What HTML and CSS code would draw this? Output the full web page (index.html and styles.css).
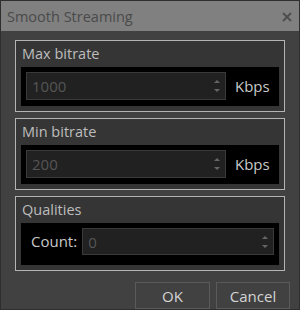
FILE: index.html
```html
<!DOCTYPE html>
<html lang="en">
<head>
<meta charset="UTF-8">
<title>Smooth Streaming</title>
<link rel="stylesheet" href="styles.css">
</head>
<body>

<div class="window">
    <div class="titlebar">
        <span class="title">Smooth Streaming</span>
        <svg class="close" width="10" height="10" viewBox="0 0 10 10">
            <path d="M1 1 L9 9 M9 1 L1 9" stroke="#4e4e4e" stroke-width="2" fill="none"/>
        </svg>
    </div>
    <div class="content">
        <div class="group">
            <div class="group-label">Max bitrate</div>
            <div class="panel">
                <div class="spin">
                    <span class="value">1000</span>
                    <span class="arrows"><i class="up"></i><i class="down"></i></span>
                </div>
                <span class="unit">Kbps</span>
            </div>
        </div>
        <div class="group">
            <div class="group-label">Min bitrate</div>
            <div class="panel">
                <div class="spin">
                    <span class="value">200</span>
                    <span class="arrows"><i class="up"></i><i class="down"></i></span>
                </div>
                <span class="unit">Kbps</span>
            </div>
        </div>
        <div class="group qualities">
            <div class="group-label">Qualities</div>
            <div class="panel">
                <span class="count-label">Count:</span>
                <div class="spin">
                    <span class="value">0</span>
                    <span class="arrows"><i class="up"></i><i class="down"></i></span>
                </div>
            </div>
        </div>
        <div class="buttons">
            <button class="btn ok">OK</button>
            <button class="btn cancel">Cancel</button>
        </div>
    </div>
</div>

</body>
</html>
```

FILE: styles.css
```css
body {
    margin: 0;
    padding: 0;
    font-family: "Open Sans", "Noto Sans", sans-serif;
    background-color: #404040;
}
.window {
    width: 300px;
    height: 310px;
    box-sizing: border-box;
    background-color: #414141;
    border: 1px solid #2e2e2e;
    display: flex;
    flex-direction: column;
}
.titlebar {
    height: 30px;
    background-color: #808080;
    display: flex;
    align-items: center;
    justify-content: space-between;
    padding: 0 7px 0 6px;
    box-sizing: border-box;
    flex-shrink: 0;
}
.title {
    color: #4a4a4a;
    font-size: 14.5px;
}
.close {
    margin-top: 2px;
}
.content {
    padding: 9px 14px 0 14px;
    display: flex;
    flex-direction: column;
    gap: 6px;
}
.group {
    border: 1px solid #b4b4b4;
    background-color: #353535;
    padding: 0 5px 5px 5px;
}
.group-label {
    height: 26px;
    line-height: 25px;
    color: #bdbdbd;
    font-size: 14.5px;
    padding-left: 1px;
}
.panel {
    background-color: #000;
    height: 39px;
    box-sizing: border-box;
    padding: 5px;
    display: flex;
    align-items: flex-start;
}
.spin {
    width: 200px;
    height: 28px;
    box-sizing: border-box;
    border: 1px solid #3a3a3a;
    background-color: #212121;
    display: flex;
    align-items: center;
    justify-content: space-between;
    padding: 0 5px 0 5px;
}
.value {
    color: #555;
    font-size: 15px;
}
.arrows {
    display: flex;
    flex-direction: column;
    gap: 6px;
}
.up, .down {
    display: block;
    width: 0;
    height: 0;
    border-left: 3px solid transparent;
    border-right: 3px solid transparent;
}
.up {
    border-bottom: 3px solid #666;
}
.down {
    border-top: 3px solid #666;
}
.unit {
    color: #c8c8c8;
    font-size: 15px;
    margin-left: 9px;
    line-height: 28px;
}
.qualities .panel {
    height: 42px;
    padding: 5px 5px 5px 10px;
}
.qualities .spin {
    flex: 1;
    height: 27px;
}
.count-label {
    color: #c8c8c8;
    font-size: 15px;
    line-height: 27px;
    margin-right: 5px;
}
.buttons {
    display: flex;
    justify-content: flex-end;
    gap: 6px;
    margin-top: 5px;
    margin-right: -5px;
}
.btn {
    height: 27px;
    box-sizing: border-box;
    border: 1px solid #5a5a5a;
    background-color: #414141;
    color: #d4d4d4;
    font-family: "Open Sans", "Noto Sans", sans-serif;
    font-size: 15px;
    padding: 0;
}
.ok {
    width: 75px;
}
.cancel {
    width: 74px;
}
```
